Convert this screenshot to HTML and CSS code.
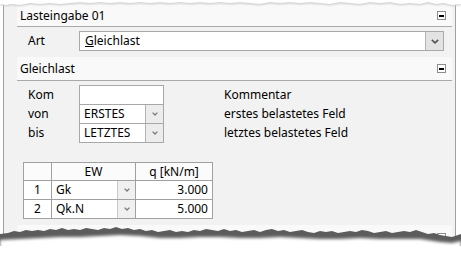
FILE: index.html
```html
<!DOCTYPE html>
<html>
<head>
<meta charset="utf-8">
<title>Lasteingabe</title>
<link rel="stylesheet" href="styles.css">
</head>
<body>
<div class="frame">
  <div class="head head-first"><span class="head-title">Lasteingabe 01</span><span class="minus"></span></div>
  <div class="art-row">
    <span class="label art-label">Art</span>
    <div class="combo combo-wide">
      <span class="combo-text"><u>G</u>leichlast</span>
      <span class="drop drop-big"><svg width="8" height="5" viewBox="0 0 8 5"><polyline points="0.8,0.8 4,3.8 7.2,0.8" fill="none" stroke="#555" stroke-width="1.6"/></svg></span>
    </div>
  </div>
  <div class="head head-second"><span class="head-title">Gleichlast</span><span class="minus"></span></div>
  <div class="form">
    <div class="form-row">
      <span class="label">Kom</span>
      <div class="field"></div>
      <span class="desc">Kommentar</span>
    </div>
    <div class="form-row">
      <span class="label">von</span>
      <div class="field combo-small"><span class="combo-text">ERSTES</span><span class="drop"><svg width="6" height="4" viewBox="0 0 6 4"><polyline points="0.6,0.6 3,3 5.4,0.6" fill="none" stroke="#7a7a7a" stroke-width="1.3"/></svg></span></div>
      <span class="desc">erstes belastetes Feld</span>
    </div>
    <div class="form-row">
      <span class="label">bis</span>
      <div class="field combo-small"><span class="combo-text">LETZTES</span><span class="drop"><svg width="6" height="4" viewBox="0 0 6 4"><polyline points="0.6,0.6 3,3 5.4,0.6" fill="none" stroke="#7a7a7a" stroke-width="1.3"/></svg></span></div>
      <span class="desc">letztes belastetes Feld</span>
    </div>
  </div>
  <div class="grid">
    <div class="cell hcell"></div>
    <div class="cell hcell">EW</div>
    <div class="cell hcell">q [kN/m]</div>
    <div class="cell num">1</div>
    <div class="cell ew"><span class="ew-text">Gk</span><span class="drop drop-cell"><svg width="6" height="4" viewBox="0 0 6 4"><polyline points="0.6,0.6 3,3 5.4,0.6" fill="none" stroke="#7a7a7a" stroke-width="1.3"/></svg></span></div>
    <div class="cell val">3.000</div>
    <div class="cell num">2</div>
    <div class="cell ew"><span class="ew-text">Qk.N</span><span class="drop drop-cell"><svg width="6" height="4" viewBox="0 0 6 4"><polyline points="0.6,0.6 3,3 5.4,0.6" fill="none" stroke="#7a7a7a" stroke-width="1.3"/></svg></span></div>
    <div class="cell val">5.000</div>
  </div>
  <div class="head head-third"><span class="head-title">&nbsp;</span><span class="minus"></span></div>
</div>

<svg class="tear-top" width="461" height="12" viewBox="0 0 461 12">
  <defs>
    <filter id="soft" x="-5%" y="-50%" width="110%" height="200%"><feGaussianBlur stdDeviation="1"/></filter>
  </defs>
  <path d="M0,0 L461,0 L461,4 L452,5 L444,3 L436,4 L428,2 L420,4 L410,3 L400,4 L390,2 L380,3 L370,2 L360,4 L350,3 L340,2 L330,4 L320,3 L310,2 L300,3 L290,2 L280,3 L270,2 L260,4 L250,3 L240,2 L230,3 L220,2 L210,3 L200,2 L190,3 L180,2 L170,3 L160,2 L150,3 L140,2 L130,3 L120,2 L110,3 L100,2 L90,3 L80,2 L70,3 L60,4 L50,3 L40,4 L30,3 L20,5 L12,4 L6,5 L0,4 Z" fill="#c8c8c8" filter="url(#soft)" transform="translate(0,1)"/>
  <path d="M0,0 L461,0 L461,4 L452,5 L444,3 L436,4 L428,2 L420,4 L410,3 L400,4 L390,2 L380,3 L370,2 L360,4 L350,3 L340,2 L330,4 L320,3 L310,2 L300,3 L290,2 L280,3 L270,2 L260,4 L250,3 L240,2 L230,3 L220,2 L210,3 L200,2 L190,3 L180,2 L170,3 L160,2 L150,3 L140,2 L130,3 L120,2 L110,3 L100,2 L90,3 L80,2 L70,3 L60,4 L50,3 L40,4 L30,3 L20,5 L12,4 L6,5 L0,4 Z" fill="#ffffff"/>
</svg>

<svg class="tear-bottom" width="461" height="35" viewBox="0 0 461 35">
  <defs>
    <filter id="blur1" x="-5%" y="-50%" width="110%" height="200%"><feGaussianBlur stdDeviation="0.5"/></filter>
    <filter id="blur2" x="-5%" y="-50%" width="110%" height="200%"><feGaussianBlur stdDeviation="1.6"/></filter>
  </defs>
  <path d="M0,35 L0,16 L8,15 L14,13 L20,14 L26,12 L32,13 L38,12 L44,13 L50,11 L56,12 L62,10 L68,12 L74,11 L80,12 L86,10 L92,11 L98,12 L104,10 L110,11 L116,9 L122,11 L128,10 L134,12 L140,11 L146,13 L152,12 L158,14 L164,13 L170,12 L176,14 L182,13 L188,14 L194,12 L200,13 L206,11 L212,12 L218,13 L224,11 L230,13 L236,12 L242,14 L248,13 L254,12 L260,14 L266,12 L272,11 L278,13 L284,12 L290,14 L296,13 L302,12 L308,14 L314,15 L320,13 L326,14 L332,13 L338,15 L344,14 L350,13 L356,14 L362,12 L368,13 L374,15 L380,14 L386,13 L392,15 L398,14 L404,13 L410,14 L416,12 L422,14 L428,16 L434,15 L440,17 L446,18 L452,19 L458,17 L461,16 L461,35 Z" fill="#5c5c5c" filter="url(#blur1)"/>
  <path d="M0,35 L0,22 L20,21 L40,20 L60,19 L80,19 L100,18 L120,17 L140,18 L160,20 L180,20 L200,19 L220,19 L240,20 L260,20 L280,19 L300,20 L320,21 L340,21 L360,20 L380,21 L400,21 L420,21 L440,24 L452,25 L461,23 L461,35 Z" fill="#ffffff" filter="url(#blur2)"/>
  <rect x="0" y="28" width="461" height="7" fill="#ffffff"/>
</svg>
</body>
</html>
```

FILE: styles.css
```css
body {
  margin: 0;
  width: 461px;
  height: 253px;
  overflow: hidden;
  position: relative;
  background: #ffffff;
  font-family: "Noto Sans", "Segoe UI", sans-serif;
  font-size: 12px;
  color: #000000;
}

.frame {
  margin-left: 3px;
  width: 453px;
  height: 253px;
  box-sizing: border-box;
  border-left: 1px solid #a0a0a0;
  border-right: 1px solid #a0a0a0;
  background: #f2f2f2;
  padding: 5px 3px 0 13px;
}

.head {
  box-sizing: border-box;
  border-bottom: 1px solid #aaaaaa;
  background: #f9f9f9;
  display: flex;
  align-items: center;
  justify-content: space-between;
  padding: 0 6px 0 3px;
  line-height: 16px;
}

.head-first {
  height: 22px;
}

.head-second {
  height: 24px;
  margin-top: 6px;
}

.head-third {
  height: 24px;
  margin-top: 6px;
  align-items: flex-start;
  padding-top: 8px;
}

.minus {
  width: 9px;
  height: 9px;
  box-sizing: border-box;
  border: 1px solid #8c8c8c;
  background: #ffffff;
  display: flex;
  align-items: center;
  justify-content: center;
}

.minus::after {
  content: "";
  width: 5px;
  height: 2px;
  background: #000000;
}

.art-row {
  display: flex;
  align-items: center;
  margin-top: 4px;
  height: 20px;
}

.label {
  padding-left: 11px;
  width: 62px;
  box-sizing: border-box;
  line-height: 16px;
}

.combo {
  box-sizing: border-box;
  border: 1px solid #a8a8a8;
  background: #ffffff;
  display: flex;
  align-items: stretch;
}

.combo-wide {
  width: 365px;
  height: 20px;
}

.combo-text {
  flex: 1;
  padding-left: 5px;
  line-height: 18px;
}

.drop {
  width: 18px;
  box-sizing: border-box;
  border-left: 1px solid #b4b4b4;
  background: #e8e8e8;
  display: flex;
  align-items: center;
  justify-content: center;
}

.drop-big {
  width: 18px;
  background: #e3e3e3;
}

.form {
  margin-top: 4px;
  display: flex;
  flex-direction: column;
}

.form-row {
  display: flex;
  align-items: center;
  height: 20px;
}

.form-row + .form-row {
  margin-top: -1px;
}

.field {
  width: 85px;
  height: 20px;
  box-sizing: border-box;
  border: 1px solid #a8a8a8;
  background: #ffffff;
  display: flex;
  align-items: stretch;
}

.combo-small .combo-text {
  padding-left: 4px;
}

.combo-small .drop {
  background: #ececec;
}

.desc {
  padding-left: 60px;
  line-height: 16px;
}

.grid {
  margin-top: 19px;
  margin-left: 6px;
  display: grid;
  grid-template-columns: 28px 84px 77px;
  grid-template-rows: 18px 19px 19px;
  width: 190px;
  box-sizing: border-box;
  border-left: 1px solid #a0a0a0;
  border-top: 1px solid #a0a0a0;
  background: #ffffff;
}

.cell {
  box-sizing: border-box;
  border-right: 1px solid #a0a0a0;
  border-bottom: 1px solid #a0a0a0;
  line-height: 17px;
  white-space: nowrap;
}

.hcell {
  text-align: center;
  background: #fbfbfb;
}

.num {
  text-align: center;
}

.ew {
  display: flex;
  align-items: stretch;
}

.ew-text {
  flex: 1;
  padding-left: 4px;
}

.drop-cell {
  background: #f0f0f0;
  border-left: 1px solid #c8c8c8;
}

.val {
  text-align: right;
  padding-right: 4px;
}

.tear-top {
  position: absolute;
  left: 0;
  top: 0;
}

.tear-bottom {
  position: absolute;
  left: 0;
  top: 218px;
}
```
